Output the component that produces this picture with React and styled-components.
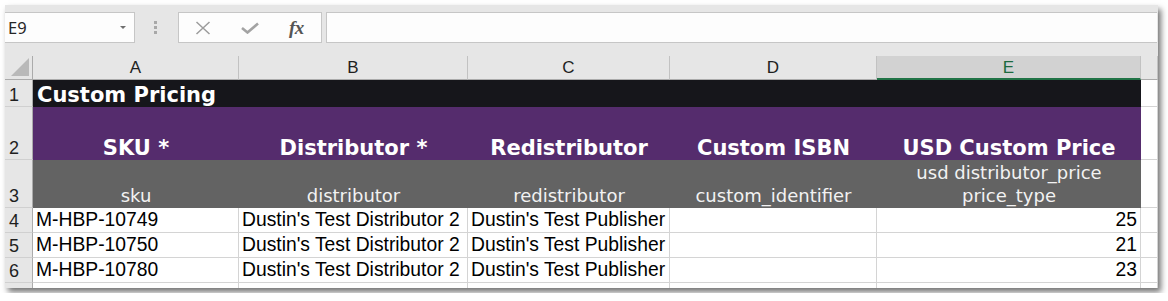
import React from "react"
import styled, { createGlobalStyle } from "styled-components"

const Grid = "#d4d4d4"
const Chrome = "#e6e6e6"
const HeaderLine = "#ababab"
const Purple = "#552c6d"
const Slate = "#636363"
const Ink = "#16161b"
const ExcelGreen = "#217346"

const GlobalStyle = createGlobalStyle`
  body {
    margin: 0;
    background: #ffffff;
  }
`

const Window = styled.div`
  margin: 5px;
  width: 1153px;
  height: 283px;
  overflow: hidden;
  background: ${Chrome};
  box-shadow: 3px 4px 6px rgba(0, 0, 0, 0.55);
  display: flex;
  flex-direction: column;
`

const Toolbar = styled.div`
  display: flex;
  align-items: center;
  height: 51px;
  box-sizing: border-box;
  padding: 7px 1px 13px 0;
  flex-shrink: 0;
`

const NameBox = styled.div`
  width: 130px;
  height: 31px;
  box-sizing: border-box;
  background: #fdfdfd;
  border: 1px solid #c6c6c6;
  border-left: none;
  display: flex;
  align-items: center;
  justify-content: space-between;
  padding: 0 8px 0 3px;
  font-family: "Noto Sans", "Open Sans", sans-serif;
  font-size: 16.5px;
  color: #262626;
`

const Caret = styled.span`
  width: 0;
  height: 0;
  border-left: 3px solid transparent;
  border-right: 3px solid transparent;
  border-top: 3px solid #6f6f6f;
`

const Grip = styled.div`
  width: 41px;
  display: flex;
  flex-direction: column;
  align-items: center;
  gap: 2px;
  padding-right: 2px;

  span {
    width: 3px;
    height: 3px;
    background: #a8a8a8;
  }
`

const FormulaButtons = styled.div`
  width: 144px;
  height: 31px;
  box-sizing: border-box;
  background: #fdfdfd;
  border: 1px solid #c6c6c6;
  display: flex;
  align-items: center;
  padding-left: 16px;
  gap: 30px;
`

const Fx = styled.span`
  font-family: "Liberation Serif", serif;
  font-style: italic;
  font-weight: bold;
  font-size: 19px;
  color: #555555;
  letter-spacing: -0.5px;
`

const FormulaInput = styled.div`
  flex: 1;
  height: 31px;
  margin-left: 4px;
  box-sizing: border-box;
  background: #fdfdfd;
  border: 1px solid #c6c6c6;
  border-right: none;
`

const Sheet = styled.div`
  display: grid;
  grid-template-columns: 28px 206px 229px 202px 207px 264px 17px;
  grid-template-rows: 24px 27px 53px 48px 25px 25px 25px 25px;
  background: #ffffff;
`

const Corner = styled.div`
  background: ${Chrome};
  border-right: 1px solid ${HeaderLine};
  border-bottom: 1px solid ${HeaderLine};
  display: flex;
  align-items: flex-end;
  justify-content: flex-end;
  padding: 0 3px 3px 0;
`

const ColHeader = styled.div`
  box-sizing: border-box;
  background: ${(p) => (p.$selected ? "#d2d2d2" : Chrome)};
  border-right: 1px solid #c2c2c2;
  border-bottom: ${(p) => (p.$selected ? `2px solid ${ExcelGreen}` : `1px solid ${HeaderLine}`)};
  color: ${(p) => (p.$selected ? "#1d6a3f" : "#1f1f1f")};
  font-family: "Liberation Sans", Arial, sans-serif;
  font-size: 17px;
  line-height: 24px;
  text-align: center;
`

const RowHeader = styled.div`
  box-sizing: border-box;
  background: ${Chrome};
  border-right: 1px solid ${HeaderLine};
  border-bottom: 1px solid #d0d0d0;
  color: #1f1f1f;
  font-family: "Liberation Sans", Arial, sans-serif;
  font-size: 18px;
  line-height: 22px;
  display: flex;
  align-items: flex-end;
  justify-content: center;
  padding-right: 9px;
`

const TitleCell = styled.div`
  grid-column: 2 / 7;
  background: ${Ink};
  color: #ffffff;
  font-family: "DejaVu Sans", Verdana, sans-serif;
  font-weight: bold;
  font-size: 21px;
  display: flex;
  align-items: flex-end;
  padding-left: 4px;
  line-height: 22px;
  padding-bottom: 1px;
`

const HeadCell = styled.div`
  background: ${Purple};
  color: #ffffff;
  font-family: "DejaVu Sans", Verdana, sans-serif;
  font-weight: bold;
  font-size: 21px;
  display: flex;
  align-items: flex-end;
  justify-content: center;
  text-align: center;
  white-space: nowrap;
`

const KeyCell = styled.div`
  background: ${Slate};
  color: #f2f2f2;
  font-family: "DejaVu Sans", Verdana, sans-serif;
  font-size: 18px;
  line-height: 23px;
  display: flex;
  flex-direction: column;
  align-items: center;
  justify-content: flex-end;
  padding-bottom: 1px;
  white-space: nowrap;
`

const Cell = styled.div`
  box-sizing: border-box;
  background: #ffffff;
  border-right: 1px solid ${Grid};
  border-bottom: 1px solid ${Grid};
  font-family: "Liberation Sans", Arial, sans-serif;
  font-size: 19.3px;
  line-height: 24px;
  color: #000000;
  padding: 0 3px;
  white-space: nowrap;
  overflow: hidden;
  text-align: ${(p) => (p.$right ? "right" : "left")};
`

const columns = ["A", "B", "C", "D", "E"]

const headings = ["SKU *", "Distributor *", "Redistributor", "Custom ISBN", "USD Custom Price"]

const keys = [["sku"], ["distributor"], ["redistributor"], ["custom_identifier"], ["usd distributor_price", "price_type"]]

const rows = [
  ["M-HBP-10749", "Dustin's Test Distributor 2", "Dustin's Test Publisher", "", "25"],
  ["M-HBP-10750", "Dustin's Test Distributor 2", "Dustin's Test Publisher", "", "21"],
  ["M-HBP-10780", "Dustin's Test Distributor 2", "Dustin's Test Publisher", "", "23"],
]

const CancelIcon = () => (
  <svg width="16" height="14" viewBox="0 0 16 14">
    <path d="M1.5 1 L14.5 13 M14.5 1 L1.5 13" stroke="#9c9c9c" strokeWidth="1.5" fill="none" />
  </svg>
)

const EnterIcon = () => (
  <svg width="18" height="12" viewBox="0 0 18 12">
    <path d="M1 6 L6.5 10.5 L17 1.5" stroke="#a3a3a3" strokeWidth="2.6" fill="none" />
  </svg>
)

const SelectAll = () => (
  <svg width="18" height="18" viewBox="0 0 18 18">
    <polygon points="18,0 18,18 0,18" fill="#b9b9b9" />
  </svg>
)

const App = () => (
  <>
    <GlobalStyle />
    <Window>
      <Toolbar>
        <NameBox>
          E9
          <Caret />
        </NameBox>
        <Grip>
          <span />
          <span />
          <span />
        </Grip>
        <FormulaButtons>
          <CancelIcon />
          <EnterIcon />
          <Fx>fx</Fx>
        </FormulaButtons>
        <FormulaInput />
      </Toolbar>

      <Sheet>
        <Corner>
          <SelectAll />
        </Corner>
        {columns.map((c) => (
          <ColHeader key={c} $selected={c === "E"}>
            {c}
          </ColHeader>
        ))}
        <ColHeader />

        <RowHeader>1</RowHeader>
        <TitleCell>Custom Pricing</TitleCell>
        <Cell />

        <RowHeader>2</RowHeader>
        {headings.map((h) => (
          <HeadCell key={h}>{h}</HeadCell>
        ))}
        <Cell />

        <RowHeader>3</RowHeader>
        {keys.map((lines) => (
          <KeyCell key={lines[0]}>
            {lines.map((l) => (
              <span key={l}>{l}</span>
            ))}
          </KeyCell>
        ))}
        <Cell />

        {rows.map((row, i) => (
          <React.Fragment key={i}>
            <RowHeader>{i + 4}</RowHeader>
            {row.map((v, j) => (
              <Cell key={j} $right={j === 4}>
                {v}
              </Cell>
            ))}
            <Cell />
          </React.Fragment>
        ))}

        {/* row 7 is clipped by the window edge, only its top shows */}
        <RowHeader />
        {columns.map((c) => (
          <Cell key={c} />
        ))}
        <Cell />
      </Sheet>
    </Window>
  </>
)

export default App
